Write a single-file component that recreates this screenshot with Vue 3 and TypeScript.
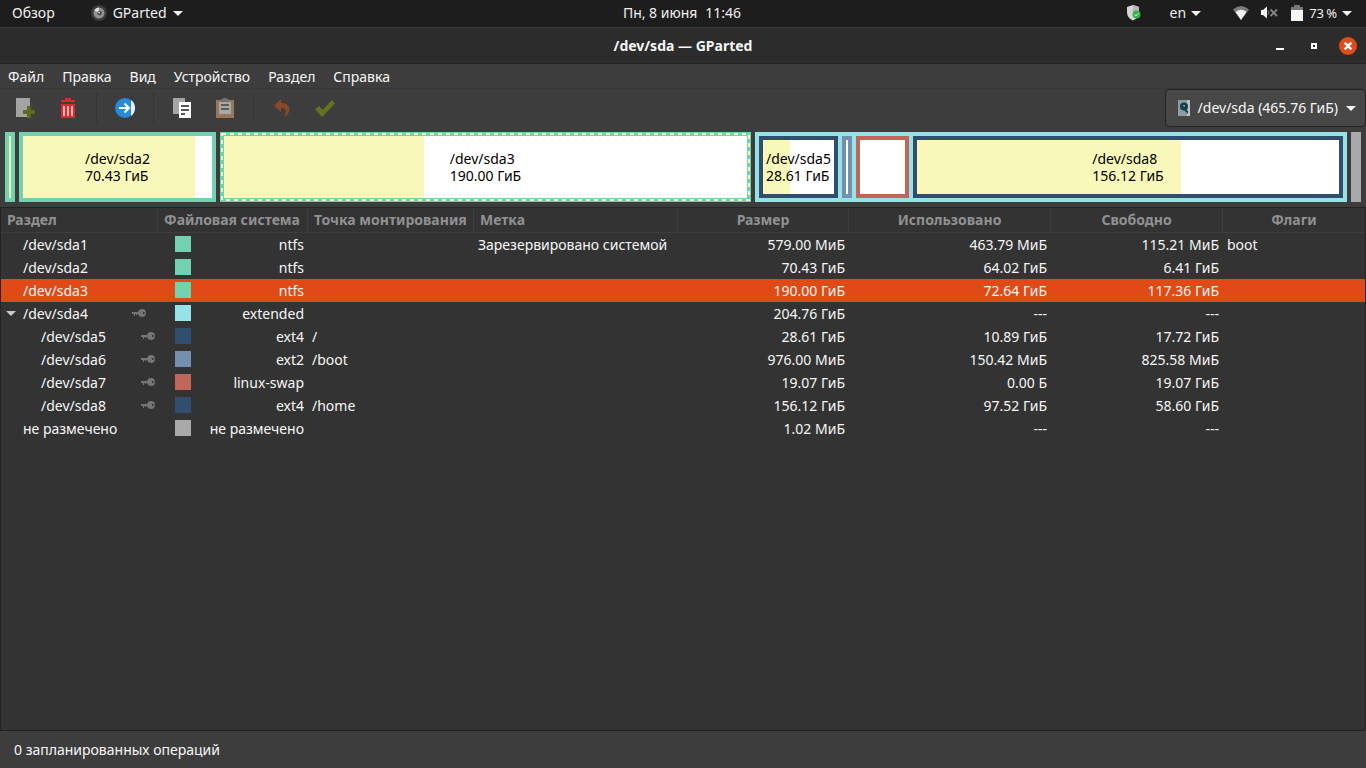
<script setup lang="ts">
interface Row {
  name: string
  level: number
  locked: boolean
  expanded?: boolean
  fs: string
  color: string
  mount: string
  label: string
  size: string
  used: string
  free: string
  flags: string
}

interface Part {
  name: string
  size: string
  kind: string
  grow: number
  used: number
  text: boolean
}

const menus: string[] = ['Файл', 'Правка', 'Вид', 'Устройство', 'Раздел', 'Справка']
const columns: string[] = ['Раздел', 'Файловая система', 'Точка монтирования', 'Метка', 'Размер', 'Использовано', 'Свободно', 'Флаги']

const rows: Row[] = [
  { name: '/dev/sda1', level: 0, locked: false, fs: 'ntfs', color: 'ntfs', mount: '', label: 'Зарезервировано системой', size: '579.00 МиБ', used: '463.79 МиБ', free: '115.21 МиБ', flags: 'boot' },
  { name: '/dev/sda2', level: 0, locked: false, fs: 'ntfs', color: 'ntfs', mount: '', label: '', size: '70.43 ГиБ', used: '64.02 ГиБ', free: '6.41 ГиБ', flags: '' },
  { name: '/dev/sda3', level: 0, locked: false, fs: 'ntfs', color: 'ntfs', mount: '', label: '', size: '190.00 ГиБ', used: '72.64 ГиБ', free: '117.36 ГиБ', flags: '' },
  { name: '/dev/sda4', level: 0, locked: true, expanded: true, fs: 'extended', color: 'extended', mount: '', label: '', size: '204.76 ГиБ', used: '---', free: '---', flags: '' },
  { name: '/dev/sda5', level: 1, locked: true, fs: 'ext4', color: 'ext4', mount: '/', label: '', size: '28.61 ГиБ', used: '10.89 ГиБ', free: '17.72 ГиБ', flags: '' },
  { name: '/dev/sda6', level: 1, locked: true, fs: 'ext2', color: 'ext2', mount: '/boot', label: '', size: '976.00 МиБ', used: '150.42 МиБ', free: '825.58 МиБ', flags: '' },
  { name: '/dev/sda7', level: 1, locked: true, fs: 'linux-swap', color: 'swap', mount: '', label: '', size: '19.07 ГиБ', used: '0.00 Б', free: '19.07 ГиБ', flags: '' },
  { name: '/dev/sda8', level: 1, locked: true, fs: 'ext4', color: 'ext4', mount: '/home', label: '', size: '156.12 ГиБ', used: '97.52 ГиБ', free: '58.60 ГиБ', flags: '' },
  { name: 'не размечено', level: 0, locked: false, fs: 'не размечено', color: 'free', mount: '', label: '', size: '1.02 МиБ', used: '---', free: '---', flags: '' },
]

const selected = '/dev/sda3'

// grow is the share of the free width inside the borders; 0 keeps the minimum width
const primary: Part[] = [
  { name: '/dev/sda1', size: '579.00 МиБ', kind: 'ntfs', grow: 0, used: 100, text: false },
  { name: '/dev/sda2', size: '70.43 ГиБ', kind: 'ntfs', grow: 189, used: 91, text: true },
  { name: '/dev/sda3', size: '190.00 ГиБ', kind: 'ntfs', grow: 523, used: 38.3, text: true },
]
const logical: Part[] = [
  { name: '/dev/sda5', size: '28.61 ГиБ', kind: 'ext4', grow: 71, used: 38, text: true },
  { name: '/dev/sda6', size: '976.00 МиБ', kind: 'ext2', grow: 0, used: 0, text: false },
  { name: '/dev/sda7', size: '19.07 ГиБ', kind: 'swap', grow: 45, used: 0, text: false },
  { name: '/dev/sda8', size: '156.12 ГиБ', kind: 'ext4', grow: 422, used: 62.5, text: true },
]
</script>

<template>
  <div class="desktop">
    <header class="panel">
      <div class="panel-left">
        <button class="bare">Обзор</button>
        <button class="bare app-menu">
          <svg width="16" height="16" viewBox="0 0 16 16" aria-hidden="true">
            <circle cx="8" cy="8" r="8" fill="#3b3b3b" />
            <circle cx="8" cy="8" r="5.500" fill="#929292" />
            <path d="M3.500 5.500 A5 5 0 0 1 8 2.500 L8 8Z" fill="#dedede" />
            <circle cx="8.500" cy="8" r="2.200" fill="#454545" />
            <circle cx="8" cy="7.500" r="1" fill="#cccccc" />
          </svg>
          <span>GParted</span>
          <i class="caret"></i>
        </button>
      </div>
      <button class="bare clock"><span>Пн, 8 июня</span><span>11:46</span></button>
      <div class="panel-right">
        <button class="bare shield" aria-label="Защита">
          <svg width="14" height="16" viewBox="0 0 14 16" aria-hidden="true">
            <path d="M6 0 L12 2 V7 Q12 13 6 15.500 Q0 13 0 7 V2Z" fill="#d6d6d6" />
            <path d="M6 0 L12 2 V7 L6 7Z" fill="#b8b8b8" />
            <circle cx="9.500" cy="9.500" r="4" fill="#33b54a" />
            <path d="M7.500 9.500 L9 11 L11.500 8.300" stroke="#c9f0cf" fill="none" />
          </svg>
        </button>
        <button class="bare lang"><span>en</span><i class="caret"></i></button>
        <button class="bare status" aria-label="Системное меню">
          <svg width="16" height="14" viewBox="0 0 16 14" aria-hidden="true">
            <path d="M0 3.500 Q8 -3.500 16 3.500 L8 14Z" fill="#7b7b7b" />
            <path d="M2.500 6 Q8 1.500 13.500 6 L8 14Z" fill="#f4f4f4" />
          </svg>
          <svg class="mute" width="17" height="14" viewBox="0 0 17 14" aria-hidden="true">
            <path d="M0 4 H2 L6 0.500 V12.500 L2 9 H0Z" fill="#f4f4f4" />
            <path d="M7 4.500 Q8.500 6.500 7 8.500" stroke="#8a8a8a" fill="none" />
            <path d="M9.500 3.500 L16 10 M16 3.500 L9.500 10" stroke="#858585" stroke-width="1.800" />
          </svg>
          <svg class="battery" width="12" height="16" viewBox="0 0 12 16" aria-hidden="true">
            <path d="M3 0 H9 V2 H12 V5 H0 V2 H3Z" fill="#777777" />
            <rect y="5" width="12" height="11" fill="#f4f4f4" />
          </svg>
          <span class="percent">73&#8239;%</span>
          <i class="caret"></i>
        </button>
      </div>
    </header>

    <div class="titlebar">
      <h1>/dev/sda — GParted</h1>
      <div class="window-buttons">
        <button class="bare" aria-label="Свернуть"><svg width="18" height="18" viewBox="0 0 18 18"><path d="M5 11 H13 V13 H5Z" fill="#fff" /></svg></button>
        <button class="bare" aria-label="Развернуть"><svg width="18" height="18" viewBox="0 0 18 18"><rect x="7" y="7" width="4" height="4" fill="none" stroke="#fff" stroke-width="2" /></svg></button>
        <button class="bare" aria-label="Закрыть"><svg width="18" height="18" viewBox="0 0 18 18"><circle cx="9" cy="9" r="9" fill="#e24b18" /><path d="M5.700 5.700 L12.300 12.300 M12.300 5.700 L5.700 12.300" stroke="#fff" stroke-width="2.400" /></svg></button>
      </div>
    </div>

    <nav class="menubar">
      <button v-for="m in menus" :key="m" class="bare">{{ m }}</button>
    </nav>

    <div class="toolbar">
      <div class="tools">
        <button class="tool" aria-label="Новый">
          <svg width="20" height="20" viewBox="0 0 20 20"><path d="M1 0 H15 V19 H1Z" fill="#a3a3a3" /><path d="M12 8 H16 V12 H20 V16 H16 V20 H12 V16 H8 V12 H12Z" fill="#5d6b1c" /></svg>
        </button>
        <button class="tool" aria-label="Удалить">
          <svg width="20" height="20" viewBox="0 0 20 20"><path d="M3 2 H7 V0 H13 V2 H17 V4 H3Z M3 6 H17 V20 H3Z" fill="#da2c2c" /><path d="M5 8 H7 V18 H5Z M9 8 H11 V18 H9Z M13 8 H15 V18 H13Z" fill="#f5b3b3" /></svg>
        </button>
        <span class="divider"></span>
        <button class="tool" aria-label="Изменить размер или переместить">
          <svg width="20" height="20" viewBox="0 0 20 20"><circle cx="10" cy="10" r="10" fill="#268bd8" /><path d="M16 2 A10 10 0 0 1 16 18Z" fill="#e9f3fb" /><path d="M4 10 H14 M9.500 5.500 L14 10 L9.500 14.500" stroke="#fff" stroke-width="2" fill="none" /></svg>
        </button>
        <span class="divider"></span>
        <button class="tool" aria-label="Копировать">
          <svg width="20" height="20" viewBox="0 0 20 20"><path d="M1 0 H13 V16 H1Z" fill="#a5a5a5" /><path d="M7 4 H19 V20 H7Z" fill="#fff" /><path d="M9 8 H17 M9 12 H17 M9 16 H13" stroke="#555" stroke-width="2" /></svg>
        </button>
        <button class="tool" aria-label="Вставить">
          <svg width="20" height="20" viewBox="0 0 20 20"><path d="M1 2 H19 V20 H1Z" fill="#98775a" /><path d="M4 4 H16 V16 H4Z" fill="#a8a8a8" /><path d="M6 1 H8 V0 H12 V1 H14 V4 H6Z" fill="#707070" /><path d="M6 7 H14 M6 11 H14" stroke="#5c5c5c" stroke-width="2" /></svg>
        </button>
        <span class="divider"></span>
        <button class="tool" aria-label="Отменить">
          <svg width="20" height="20" viewBox="0 0 20 20"><path d="M9 1 V5 C15 5 19 9 17 14 Q16 17 12 19 Q15 13 13 11 Q12 10 9 10 V14 L2 7.500Z" fill="#8b4728" /></svg>
        </button>
        <button class="tool" aria-label="Применить">
          <svg width="20" height="20" viewBox="0 0 20 20"><path d="M0 11 L4 8 L7.500 12 L17 2 L20 5.500 L7 19Z" fill="#66721d" /></svg>
        </button>
      </div>
      <button class="device">
        <svg width="12" height="16" viewBox="0 0 12 16" aria-hidden="true">
          <rect width="12" height="16" fill="#8b9da1" /><rect x="9" width="3" height="16" fill="#bcc5bd" />
          <circle cx="6" cy="6.500" r="4" fill="#173f50" /><circle cx="6" cy="6" r="1" fill="#9db0b4" /><path d="M3 4 L10 11 V14 L5 9Z" fill="#173f50" />
        </svg>
        <span>/dev/sda (465.76 ГиБ)</span>
        <i class="caret"></i>
      </button>
    </div>

    <div class="disk">
      <div v-for="p in primary" :key="p.name" class="part" :class="[p.kind, { selected: p.name === selected }]" :style="{ flexGrow: p.grow }">
        <div class="space"><div class="used" :style="{ width: p.used + '%' }"></div></div>
        <div v-if="p.text" class="caption"><span>{{ p.name }}<br />{{ p.size }}</span></div>
        <svg v-if="p.name === selected" class="dashes" aria-hidden="true"><rect x="1" y="1" /></svg>
      </div>
      <div class="extended-part">
        <div v-for="p in logical" :key="p.name" class="part" :class="p.kind" :style="{ flexGrow: p.grow }">
          <div class="space"><div class="used" :style="{ width: p.used + '%' }"></div></div>
          <div v-if="p.text" class="caption"><span>{{ p.name }}<br />{{ p.size }}</span></div>
        </div>
      </div>
      <div class="unallocated"></div>
    </div>

    <main class="list">
      <table>
        <colgroup>
          <col class="c-name" /><col class="c-fs" /><col class="c-mount" /><col class="c-label" />
          <col class="c-size" /><col class="c-used" /><col class="c-free" /><col />
        </colgroup>
        <thead>
          <tr><th v-for="(c, i) in columns" :key="c" scope="col" :class="{ center: i > 3 }">{{ c }}</th></tr>
        </thead>
        <tbody>
          <tr v-for="r in rows" :key="r.name" :class="{ active: r.name === selected }">
            <td>
              <div class="name" :class="{ nested: r.level === 1 }">
                <span class="expander"><i v-if="r.expanded" class="caret"></i></span>
                <span class="device-name">{{ r.name }}</span>
                <svg v-if="r.locked" class="key" width="14" height="9" viewBox="0 0 14 9" aria-hidden="true">
                  <path fill-rule="evenodd" d="M0 3 H6 Q7 0 10 0 Q14 0 14 4 Q14 8 10 8 Q7 8 6 5 H5 V6 H4 V5 H3 V7 H2 V5 H0Z M11 3 V5 H12.500 V3Z" fill="#757575" />
                </svg>
              </div>
            </td>
            <td><div class="fs"><i class="swatch" :class="r.color"></i><span>{{ r.fs }}</span></div></td>
            <td>{{ r.mount }}</td>
            <td>{{ r.label }}</td>
            <td class="num">{{ r.size }}</td>
            <td class="num">{{ r.used }}</td>
            <td class="num">{{ r.free }}</td>
            <td>{{ r.flags }}</td>
          </tr>
        </tbody>
      </table>
    </main>

    <footer class="statusbar">0 запланированных операций</footer>
  </div>
</template>

<style>
body { margin: 0; background: #3d3d3d; }
</style>

<style scoped>
* { box-sizing: border-box; }
.desktop { display: flex; flex-direction: column; min-height: 100vh; font: 14px/20px "Noto Sans", "Open Sans", sans-serif; color: #f7f7f7; background: #3d3d3d; }
.desktop svg { display: block; flex: none; }
.bare { display: flex; align-items: center; padding: 0; border: 0; background: none; color: inherit; font: inherit; white-space: nowrap; }
.caret { flex: none; width: 0; height: 0; border: 5px solid transparent; border-top-color: currentColor; border-bottom: 0; }

.panel { display: grid; grid-template-columns: 1fr auto 1fr; align-items: center; height: 28px; padding: 0 14px 1px 12px; background: #1d1d1d; border-bottom: 1px solid #3a3a3a; color: #f0f0f0; }
.panel-left { display: flex; gap: 36px; }
.app-menu { gap: 6px; }
.clock { gap: 8px; }
.panel-right { display: flex; justify-content: flex-end; align-items: center; }
.shield { margin-right: 29px; }
.lang { gap: 5px; margin-right: 32px; }
.mute { margin-left: 12px; }
.battery { margin-left: 13px; }
.percent { margin: 0 5px 0 6px; font-size: 13px; }

.titlebar { display: grid; grid-template-columns: 1fr auto 1fr; align-items: center; height: 36px; padding: 0 9px; background: #2c2c2c; border-bottom: 1px solid #242424; }
.titlebar h1 { grid-column: 2; margin: 0; font-size: 14px; line-height: 20px; }
.window-buttons { display: flex; justify-content: flex-end; align-items: center; gap: 16px; }

.menubar { display: flex; gap: 18px; height: 25px; padding: 2px 8px 0; align-items: center; border-bottom: 1px solid #383838; }
.toolbar { display: flex; justify-content: space-between; align-items: center; height: 38px; margin-bottom: 5px; }
.tools { display: flex; align-items: center; padding-left: 4px; }
.tool { display: grid; place-items: center; width: 42px; height: 30px; margin-right: 1px; padding: 0; border: 0; background: none; }
.divider { width: 1px; height: 30px; margin: 0 7px 0 6px; background: #353535; }
.device { display: flex; align-items: center; height: 38px; padding: 0 9px 0 12px; gap: 8px; border: 1px solid #232323; border-radius: 4px; background: #474747; color: inherit; font: inherit; white-space: nowrap; }

.disk { display: flex; gap: 4px; height: 70px; margin: 0 5px 5px; }
.part { display: grid; flex: 0 0 10px; min-width: 10px; border: 4px solid; color: #000; }
.part:has(.caption), .part.swap { flex-basis: 8px; }
.part.ntfs { border-color: #72d1b0; }
.part.ext4 { border-color: #314e6e; }
.part.ext2 { border-color: #7590ae; }
.part.swap { border-color: #c1665a; }
.space, .caption { grid-area: 1 / 1; min-width: 0; }
.space { background: #fff; }
.used { height: 100%; background: #f8f8ba; }
.caption { display: flex; justify-content: center; align-items: center; line-height: 17px; white-space: nowrap; }
.part.selected { position: relative; }
.dashes { position: absolute; inset: -3px; width: calc(100% + 6px); height: calc(100% + 6px); }
.dashes rect { width: calc(100% - 2px); height: calc(100% - 2px); fill: none; stroke: #f8f8ba; stroke-width: 2; stroke-dasharray: 4 4; }
.extended-part { display: flex; flex: 584 1 8px; gap: 4px; min-width: 0; border: 4px solid #96e3e5; background: #96e3e5; }
.unallocated { flex: 0 0 10px; background: #a9a9a9; }

.list { flex: 1; border: 1px solid #232323; background: #333333; }
table { width: 100%; border-collapse: separate; border-spacing: 0; table-layout: fixed; }
.c-name { width: 157px; }
.c-fs { width: 150px; }
.c-mount { width: 166px; }
.c-label { width: 204px; }
.c-size { width: 171px; }
.c-used { width: 202px; }
.c-free { width: 172px; }
th { height: 25px; padding: 0 6px; border-right: 1px solid #3d3d3d; border-bottom: 1px solid #3d3d3d; color: #919191; font-size: 14px; line-height: 20px; text-align: left; white-space: nowrap; }
th:last-child { border-right: 0; }
th.center { text-align: center; }
td { height: 23px; padding: 0 4px; line-height: 23px; white-space: nowrap; }
td.num { text-align: right; }
.active td { background: #e04a17; }
.name { display: flex; align-items: center; }
.nested { padding-left: 18px; }
.expander { width: 18px; color: #c9c9c9; }
.expander .caret { display: block; margin-left: 1px; }
.device-name { flex: 1; }
.key { margin-right: 8px; }
.nested .key { margin-right: -1px; }
.fs { display: flex; align-items: flex-start; justify-content: space-between; padding-left: 13px; }
.swatch { width: 16px; height: 16px; margin-top: 3px; }
.swatch.ntfs { background: #72d1b0; }
.swatch.extended { background: #96e3e5; }
.swatch.ext4 { background: #314e6e; }
.swatch.ext2 { background: #7590ae; }
.swatch.swap { background: #c1665a; }
.swatch.free { background: #a9a9a9; }
.statusbar { height: 37px; padding: 9px 14px; }
</style>
